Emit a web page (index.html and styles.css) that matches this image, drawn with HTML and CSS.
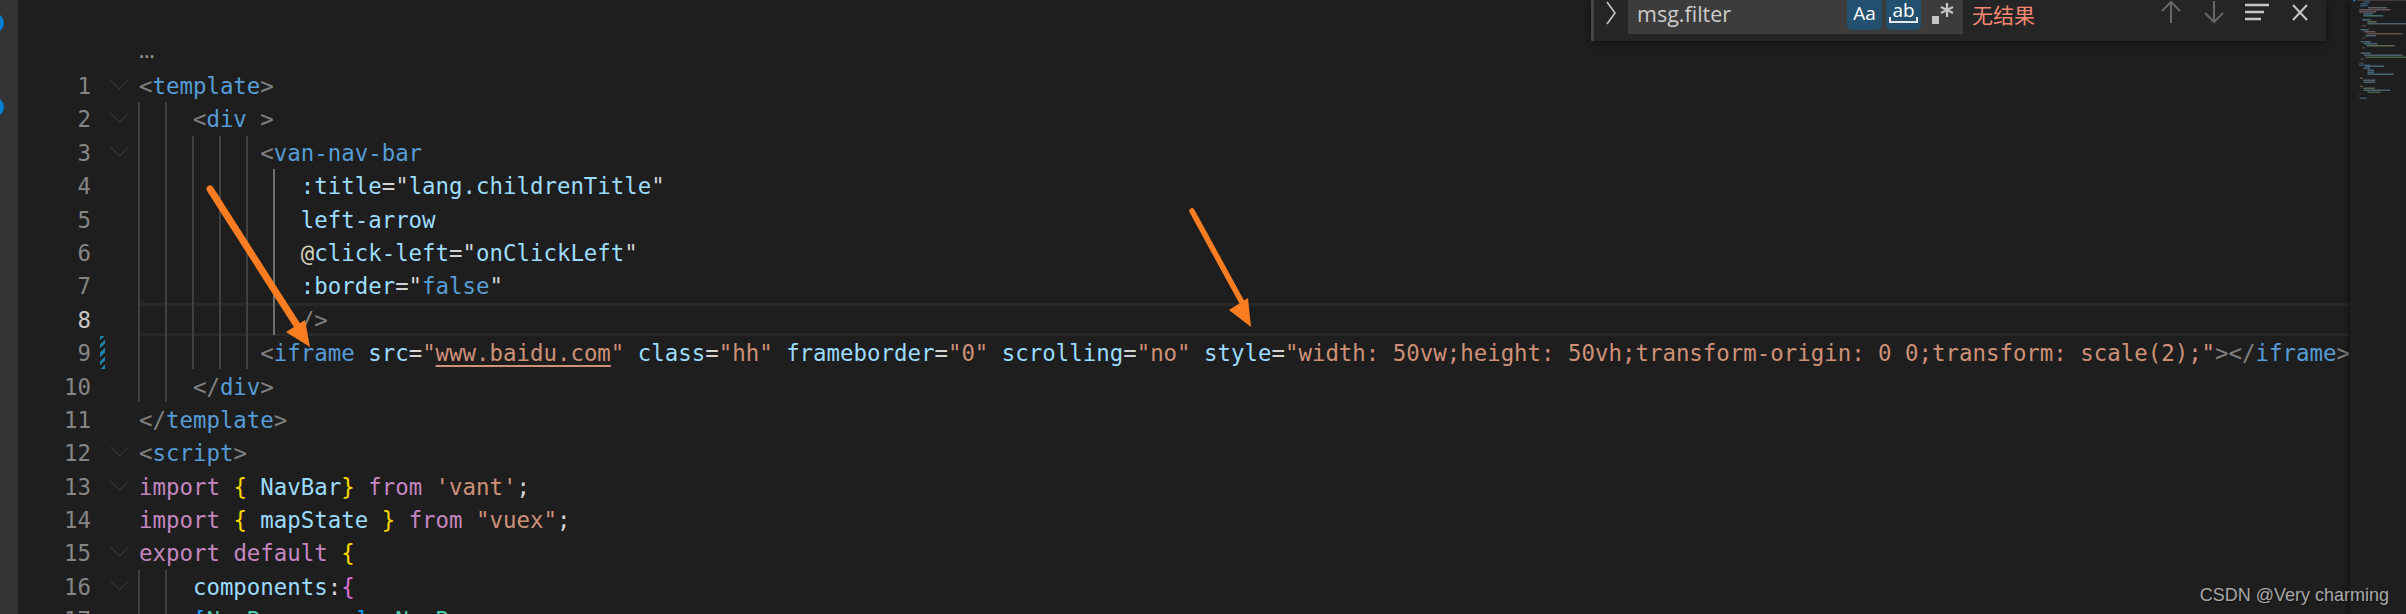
FILE: index.html
```html
<!DOCTYPE html>
<html lang="en">
<head>
<meta charset="utf-8">
<title>Editor</title>
<link rel="stylesheet" href="styles.css">
</head>
<body>
<div class="window">
  <aside class="activity">
    <span class="dot dot-a"></span>
    <span class="dot dot-b"></span>
  </aside>
  <main class="editor">
    <div class="row"><span class="num"></span><span class="fold"></span><span class="code dots">…</span></div>
    <div class="row"><span class="num">1</span><span class="fold open"></span><span class="code"><i class="p">&lt;</i><i class="t">template</i><i class="p">&gt;</i></span></div>
    <div class="row"><span class="num">2</span><span class="fold open"></span><span class="code">    <i class="p">&lt;</i><i class="t">div</i> <i class="p">&gt;</i></span></div>
    <div class="row"><span class="num">3</span><span class="fold open"></span><span class="code">         <i class="p">&lt;</i><i class="t">van-nav-bar</i></span></div>
    <div class="row"><span class="num">4</span><span class="fold"></span><span class="code">            <i class="a">:title</i><i class="w">="</i><i class="a">lang.childrenTitle</i><i class="w">"</i></span></div>
    <div class="row"><span class="num">5</span><span class="fold"></span><span class="code">            <i class="a">left-arrow</i></span></div>
    <div class="row"><span class="num">6</span><span class="fold"></span><span class="code">            <i class="at">@</i><i class="a">click-left</i><i class="w">="</i><i class="a">onClickLeft</i><i class="w">"</i></span></div>
    <div class="row"><span class="num">7</span><span class="fold"></span><span class="code">            <i class="a">:border</i><i class="w">="</i><i class="t">false</i><i class="w">"</i></span></div>
    <div class="row"><span class="num current-num">8</span><span class="fold"></span><span class="code current">            <i class="p">/&gt;</i></span></div>
    <div class="row"><span class="num">9</span><span class="fold"></span><span class="code">         <i class="p">&lt;</i><i class="t">iframe</i> <i class="a">src</i><i class="w">=</i><i class="s">"<u class="link">www.baidu.com</u>"</i> <i class="a">class</i><i class="w">=</i><i class="s">"hh"</i> <i class="a">frameborder</i><i class="w">=</i><i class="s">"0"</i> <i class="a">scrolling</i><i class="w">=</i><i class="s">"no"</i> <i class="a">style</i><i class="w">=</i><i class="s">"width: 50vw;height: 50vh;transform-origin: 0 0;transform: scale(2);"</i><i class="p">&gt;&lt;/</i><i class="t">iframe</i><i class="p">&gt;</i></span></div>
    <div class="row"><span class="num">10</span><span class="fold"></span><span class="code">    <i class="p">&lt;/</i><i class="t">div</i><i class="p">&gt;</i></span></div>
    <div class="row"><span class="num">11</span><span class="fold"></span><span class="code"><i class="p">&lt;/</i><i class="t">template</i><i class="p">&gt;</i></span></div>
    <div class="row"><span class="num">12</span><span class="fold open"></span><span class="code"><i class="p">&lt;</i><i class="t">script</i><i class="p">&gt;</i></span></div>
    <div class="row"><span class="num">13</span><span class="fold open"></span><span class="code"><i class="k">import</i> <i class="y">{</i> <i class="a">NavBar</i><i class="y">}</i> <i class="k">from</i> <i class="s">'vant'</i><i class="w">;</i></span></div>
    <div class="row"><span class="num">14</span><span class="fold"></span><span class="code"><i class="k">import</i> <i class="y">{</i> <i class="a">mapState</i> <i class="y">}</i> <i class="k">from</i> <i class="s">"vuex"</i><i class="w">;</i></span></div>
    <div class="row"><span class="num">15</span><span class="fold open"></span><span class="code"><i class="k">export</i> <i class="k">default</i> <i class="y">{</i></span></div>
    <div class="row"><span class="num">16</span><span class="fold open"></span><span class="code">    <i class="a">components</i><i class="w">:</i><i class="m">{</i></span></div>
    <div class="row"><span class="num">17</span><span class="fold"></span><span class="code">    <i class="b">[</i><i class="g">NavBar</i><i class="w">.</i><i class="a">name</i><i class="b">]</i><i class="w">:</i> <i class="g">NavBar</i><i class="w">,</i></span></div>

    <span class="guide g1 span-a"></span>
    <span class="guide g2 span-a"></span>
    <span class="guide g3 span-b"></span>
    <span class="guide g4 span-b"></span>
    <span class="guide g5 span-b"></span>
    <span class="guide g6 span-c"></span>
    <span class="guide g1 span-d"></span>
    <span class="guide g2 span-d"></span>
    <span class="dirty"></span>
  </main>
  <aside class="minimap">
    <svg class="mini-svg" viewBox="0 0 198 450" width="66" height="150" aria-hidden="true">
      <rect x="40" y="0" width="6" height="4" fill="#0e8fd6"/>
      <rect x="52" y="0" width="146" height="2" fill="#5a4a44"/>
      <rect x="70" y="4" width="20" height="3" fill="#3f6d92"/>
      <rect x="62" y="10" width="24" height="3" fill="#3f6d92"/>
      <rect x="60" y="16" width="22" height="3" fill="#3f6d92"/>
      <rect x="84" y="22" width="58" height="3" fill="#7a7f8c"/>
      <rect x="58" y="28" width="94" height="3" fill="#8a6f7e"/>
      <rect x="58" y="34" width="50" height="3" fill="#8a6f7e"/>
      <rect x="70" y="40" width="28" height="3" fill="#5a88a6"/>
      <rect x="70" y="46" width="60" height="3" fill="#4f9a8c"/>
      <rect x="66" y="58" width="26" height="3" fill="#5a88a6"/>
      <rect x="82" y="64" width="28" height="3" fill="#7a8c6a"/>
      <rect x="82" y="70" width="116" height="3" fill="#6a8296"/>
      <rect x="66" y="76" width="12" height="3" fill="#555"/>
      <rect x="62" y="88" width="24" height="3" fill="#5a88a6"/>
      <rect x="72" y="94" width="34" height="3" fill="#8a6f7e"/>
      <rect x="80" y="100" width="108" height="3" fill="#8a6458"/>
      <rect x="76" y="106" width="32" height="3" fill="#5a88a6"/>
      <rect x="66" y="112" width="10" height="3" fill="#555"/>
      <rect x="62" y="124" width="30" height="3" fill="#5a88a6"/>
      <rect x="72" y="130" width="40" height="3" fill="#5a88a6"/>
      <rect x="80" y="136" width="84" height="3" fill="#7a8c6a"/>
      <rect x="66" y="142" width="10" height="3" fill="#555"/>
      <rect x="62" y="158" width="30" height="3" fill="#5a88a6"/>
      <rect x="72" y="164" width="116" height="3" fill="#6a8296"/>
      <rect x="76" y="170" width="122" height="3" fill="#5f8060"/>
      <rect x="62" y="176" width="10" height="3" fill="#555"/>
      <rect x="58" y="188" width="12" height="3" fill="#555"/>
      <rect x="56" y="194" width="34" height="3" fill="#3f6d92"/>
      <rect x="76" y="197" width="56" height="3" fill="#5a88a6"/>
      <rect x="70" y="203" width="20" height="3" fill="#5a88a6"/>
      <rect x="82" y="209" width="20" height="3" fill="#5a88a6"/>
      <rect x="82" y="215" width="20" height="3" fill="#5a88a6"/>
      <rect x="82" y="221" width="80" height="3" fill="#5a88a6"/>
      <rect x="60" y="233" width="8" height="3" fill="#8a7a50"/>
      <rect x="70" y="239" width="36" height="3" fill="#6a8296"/>
      <rect x="70" y="245" width="36" height="3" fill="#6a8296"/>
      <rect x="60" y="257" width="8" height="3" fill="#8a7a50"/>
      <rect x="70" y="263" width="34" height="3" fill="#7a8c6a"/>
      <rect x="70" y="269" width="80" height="3" fill="#6a8296"/>
      <rect x="82" y="275" width="40" height="3" fill="#5f8060"/>
      <rect x="58" y="281" width="4" height="3" fill="#555"/>
      <rect x="58" y="293" width="22" height="3" fill="#3f6d92"/>
    </svg>
  </aside>

  <section class="find">
    <svg class="find-toggle" viewBox="0 0 14 26" width="14" height="26" aria-hidden="true"><path d="M3 2 L11 13 L3 24" fill="none" stroke="#c5c5c5" stroke-width="1.6"/></svg>
    <div class="find-input">
      <span class="find-text">msg.filter</span>
      <span class="opt on">Aa</span>
      <span class="opt on opt-word"><b class="word">ab</b></span>
      <svg class="regex" viewBox="0 0 24 24" width="24" height="24" aria-hidden="true"><rect x="1" y="15" width="7" height="8" fill="#c5c5c5"/><path d="M16 2 V16 M10 6 L22 12 M22 6 L10 12" stroke="#c5c5c5" stroke-width="2.2" fill="none"/></svg>
    </div>
    <span class="find-msg">无结果</span>
    <div class="find-actions">
      <svg viewBox="0 0 24 24" width="24" height="24" aria-hidden="true"><path d="M12 23 V2 M3 11 L12 2 L21 11" fill="none" stroke="#666" stroke-width="2"/></svg>
      <svg viewBox="0 0 24 24" width="24" height="24" aria-hidden="true"><path d="M12 1 V22 M3 13 L12 22 L21 13" fill="none" stroke="#666" stroke-width="2"/></svg>
      <svg viewBox="0 0 24 24" width="24" height="24" aria-hidden="true"><path d="M0 5 H24 M0 12 H19 M0 19 H16" fill="none" stroke="#c5c5c5" stroke-width="2.4"/></svg>
      <svg viewBox="0 0 24 24" width="24" height="24" aria-hidden="true"><path d="M5 5 L19 20 M19 5 L5 20" fill="none" stroke="#c5c5c5" stroke-width="2"/></svg>
    </div>
  </section>

  <svg class="arrows" viewBox="0 0 2406 614" width="2406" height="614" aria-hidden="true">
    <path d="M210 189 L300 330" stroke="#fb7d22" stroke-width="7" stroke-linecap="round" fill="none"/>
    <polygon points="286,332 305,320 310,347" fill="#fb7d22"/>
    <path d="M1192 211 L1245 308" stroke="#fb7d22" stroke-width="5.5" stroke-linecap="round" fill="none"/>
    <polygon points="1229,310 1248,298 1251,327" fill="#fb7d22"/>
  </svg>

  <span class="watermark">CSDN @Very charming</span>
</div>
</body>
</html>
```

FILE: styles.css
```css
* { box-sizing: border-box; }
html, body { margin: 0; padding: 0; background: #1e1e1e; }
.window {
  position: relative;
  display: flex;
  width: 2406px;
  height: 614px;
  overflow: hidden;
  background: #1e1e1e;
}
.activity {
  position: relative;
  flex: 0 0 18px;
  background: #333;
}
.dot {
  position: absolute;
  left: -16px;
  width: 20px;
  height: 20px;
  border-radius: 50%;
  background: #007fd4;
}
.dot-a { top: 13px; }
.dot-b { top: 97px; }

.editor {
  position: relative;
  flex: 1 1 auto;
  min-width: 0;
  padding-top: 35.6px;
  font-family: "DejaVu Sans Mono", "Liberation Mono", monospace;
  font-size: 22.4px;
  color: #d4d4d4;
}
.row {
  display: flex;
  height: 33.4px;
  line-height: 35px;
}
.num {
  flex: 0 0 73px;
  text-align: right;
  color: #858585;
}
.current-num { color: #c6c6c6; }
.fold {
  position: relative;
  flex: 0 0 48px;
}
.fold.open::before {
  content: "";
  position: absolute;
  left: 22px;
  top: 5px;
  width: 12px;
  height: 12px;
  border-right: 1.5px solid #3a3a3a;
  border-bottom: 1.5px solid #3a3a3a;
  transform: rotate(45deg);
}
.code {
  flex: 1 1 auto;
  min-width: 0;
  overflow: hidden;
  white-space: pre;
}
.code i, .code u { font-style: normal; }
.dots {
  color: #9a9a9a;
  font-family: "Liberation Mono", monospace;
  font-size: 26px;
  line-height: 30px;
}
.current {
  border-top: 3px solid #282828;
  border-bottom: 3px solid #282828;
  line-height: 29px;
}
.p { color: #808080; }
.t { color: #569cd6; }
.a { color: #9cdcfe; }
.w { color: #d4d4d4; }
.s { color: #ce9178; }
.at { color: #d8d3bd; }
.k { color: #c586c0; }
.y { color: #ffd700; }
.m { color: #da70d6; }
.b { color: #179fff; }
.g { color: #4ec9b0; }
.link {
  text-decoration: underline;
  text-decoration-thickness: 2px;
  text-underline-offset: 4px;
}

.guide {
  position: absolute;
  width: 2px;
  background: #404040;
}
.g1 { left: 120px; }
.g2 { left: 147px; }
.g3 { left: 174px; }
.g4 { left: 201px; }
.g5 { left: 228px; }
.g6 { left: 255px; background: #707070; }
.span-a { top: 102px; height: 300px; }
.span-b { top: 136px; height: 233px; }
.span-c { top: 169px; height: 166px; }
.span-d { top: 570px; height: 44px; }

.dirty {
  position: absolute;
  left: 82px;
  top: 336px;
  width: 5px;
  height: 33px;
  background: repeating-linear-gradient(-45deg, #1b81a8 0 3px, #1e1e1e 3px 6px);
}

.minimap {
  position: relative;
  flex: 0 0 56px;
  background: #1e1e1e;
  box-shadow: -4px 0 6px -2px rgba(0, 0, 0, 0.45);
}
.mini-svg {
  position: absolute;
  left: -10px;
  top: 0;
}

.find {
  position: absolute;
  left: 1591px;
  top: 0;
  width: 735px;
  height: 41px;
  display: flex;
  align-items: flex-start;
  padding-right: 14px;
  background: #252526;
  border-left: 3px solid #454545;
  box-shadow: 0 2px 8px rgba(0, 0, 0, 0.4);
  font-family: "Open Sans", "Noto Sans", sans-serif;
}
.find-toggle {
  flex: 0 0 14px;
  margin: 0 0 0 10px;
}
.find-input {
  flex: 0 0 335px;
  height: 34px;
  margin-left: 10px;
  display: flex;
  align-items: flex-start;
  background: #3c3c3c;
  color: #ccc;
}
.find-text {
  flex: 0 0 219px;
  padding-left: 9px;
  font-size: 21.5px;
  line-height: 28px;
  color: #cccccc;
}
.opt {
  flex: 0 0 35px;
  height: 30px;
  margin-right: 4px;
  border-radius: 0 0 5px 5px;
  background: #24506f;
  color: #fff;
  font-size: 19px;
  line-height: 26px;
  text-align: center;
}
.opt-word { padding: 0 3px; }
.word {
  position: relative;
  display: block;
  height: 23px;
  font-weight: 400;
  line-height: 21px;
  border-bottom: 2px solid #e8e8e8;
}
.word::before,
.word::after {
  content: "";
  position: absolute;
  bottom: -2px;
  width: 2px;
  height: 6px;
  background: #e8e8e8;
}
.word::before { left: 0; }
.word::after { right: 0; }
.regex { margin-left: 6px; margin-top: 1px; }
.find-msg {
  margin-left: 9px;
  font-family: "Noto Sans CJK SC", sans-serif;
  font-size: 21px;
  line-height: 29px;
  color: #f48771;
}
.find-actions {
  margin-left: auto;
  display: flex;
  gap: 19px;
}

.arrows {
  position: absolute;
  left: 0;
  top: 0;
  pointer-events: none;
}
.watermark {
  position: absolute;
  right: 17px;
  bottom: 7px;
  font-family: "Liberation Sans", Arial, sans-serif;
  font-size: 18px;
  line-height: 24px;
  color: #a8a8a8;
  text-shadow: 1px 1px 1px #111;
}
```
